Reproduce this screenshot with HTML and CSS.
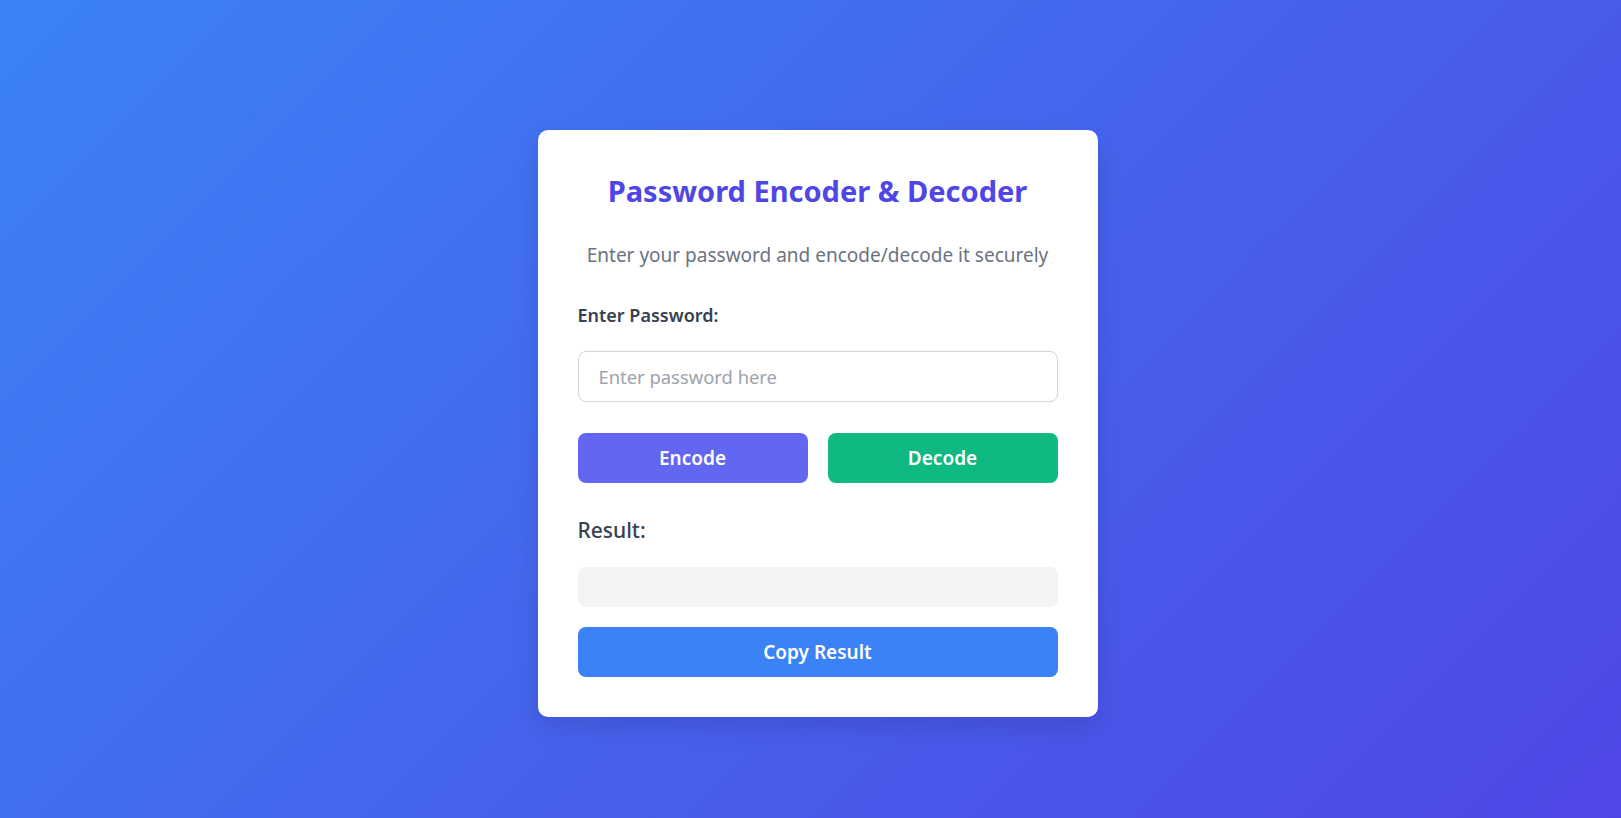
FILE: index.html
```html
<!DOCTYPE html>
<html lang="en">
<head>
<meta charset="utf-8">
<title>Password Encoder &amp; Decoder</title>
<link rel="stylesheet" href="styles.css">
</head>
<body>
<main class="page">
  <section class="card">
    <h1 class="title">Password Encoder &amp; Decoder</h1>
    <p class="subtitle">Enter your password and encode/decode it securely</p>
    <label class="label" for="pw">Enter Password:</label>
    <input class="input" id="pw" type="text" placeholder="Enter password here">
    <div class="actions">
      <button class="btn btn-encode">Encode</button>
      <button class="btn btn-decode">Decode</button>
    </div>
    <h2 class="result-label">Result:</h2>
    <div class="result-box"></div>
    <button class="btn btn-copy">Copy Result</button>
  </section>
</main>
</body>
</html>
```
FILE: styles.css
```css
* { box-sizing: border-box; }
html, body { margin: 0; padding: 0; }
body {
  font-family: "Noto Sans", "Open Sans", sans-serif;
  background: linear-gradient(135deg, #3b82f6 0%, #4f46e5 100%);
  min-height: 100vh;
}
.page {
  min-height: 100vh;
  padding: 28px 0 0 14px;
  display: flex;
  align-items: center;
  justify-content: center;
}
.card {
  width: 560px;
  background: #fff;
  border-radius: 10px;
  padding: 40px;
  box-shadow: 0 10px 25px rgba(0, 0, 0, 0.12);
  display: flex;
  flex-direction: column;
}
.title {
  margin: 0 0 30px;
  text-align: center;
  color: #4f46e5;
  font-size: 29px;
  line-height: 42px;
  font-weight: 700;
}
.subtitle {
  margin: 0 0 33px;
  text-align: center;
  color: #6b7280;
  font-size: 19px;
  line-height: 27px;
}
.label {
  color: #374151;
  font-size: 18px;
  line-height: 27px;
  font-weight: 600;
  margin-bottom: 22px;
}
.input {
  height: 51px;
  border: 1px solid #d1d5db;
  border-radius: 8px;
  padding: 0 20px;
  font-family: inherit;
  font-size: 18.4px;
  color: #374151;
  margin-bottom: 31px;
}
.input::placeholder { color: #9ca3af; }
.actions {
  display: grid;
  grid-template-columns: 1fr 1fr;
  gap: 20px;
  margin-bottom: 32px;
}
.btn {
  height: 50px;
  border: 0;
  border-radius: 8px;
  color: #fff;
  font-family: inherit;
  font-size: 19px;
  font-weight: 600;
  cursor: pointer;
}
.btn-encode { background: #6366f1; }
.btn-decode { background: #10b981; }
.btn-copy { background: #3b82f6; }
.result-label {
  margin: 0 0 22px;
  color: #374151;
  font-size: 21px;
  line-height: 30px;
  font-weight: 500;
}
.result-box {
  height: 40px;
  background: #f3f4f6;
  border-radius: 8px;
  margin-bottom: 20px;
}
```
